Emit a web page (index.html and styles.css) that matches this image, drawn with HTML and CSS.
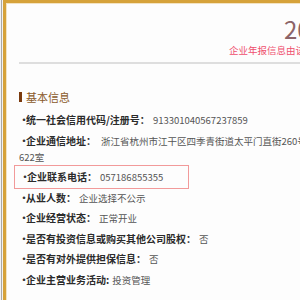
FILE: index.html
```html
<!DOCTYPE html>
<html lang="zh-CN">
<head>
  <meta charset="UTF-8">
  <title>企业年度报告</title>
  <link rel="stylesheet" href="styles.css">
</head>
<body>
  <div class="frame">
    <div class="report">
      <div class="report-head">
        <div class="report-title">2018年度报告</div>
        <div class="report-note">企业年报信息由该企业提供，企业对其报送信息的真实性、合法性负责</div>
      </div>
      <hr class="divider">

      <h3 class="section-title"><span class="mark"></span>基本信息</h3>
      <ul class="info-list">
        <li><span class="label">统一社会信用代码/注册号：</span><span class="value">913301040567237859</span></li>
        <li><span class="label">企业通信地址：</span><span class="value addr">浙江省杭州市江干区四季青街道太平门直街260号三新银座大厦622室</span></li>
        <li class="highlight"><span class="label">企业联系电话：</span><span class="value">057186855355</span></li>
        <li><span class="label">从业人数：</span><span class="value">企业选择不公示</span></li>
        <li><span class="label">企业经营状态：</span><span class="value">正常开业</span></li>
        <li><span class="label">是否有投资信息或购买其他公司股权：</span><span class="value">否</span></li>
        <li><span class="label">是否有对外提供担保信息：</span><span class="value">否</span></li>
        <li><span class="label">企业主营业务活动:</span><span class="value">投资管理</span></li>
      </ul>
    </div>
  </div>
</body>
</html>
```

FILE: styles.css
```css
body {
  margin: 0;
  overflow: hidden;
  background: #f2f2f2;
  font-family: "Noto Sans CJK SC", "Noto Sans", sans-serif;
  color: #333;
}
.frame {
  margin-left: 1px;
  padding-left: 1px;
  border-left: 1px solid #a8a8a8;
  height: 300px;
}
.report {
  width: 480px;
  height: 100%;
  box-sizing: border-box;
  background: #fdfdfd;
  border-top: 3px solid #d6a23a;
  border-left: 3px solid #d6a23a;
  box-shadow: inset 1px 1px 0 #f3e3c2;
  padding: 0 0 0 13px;
}
.report-head {
  padding-top: 12px;
}
.report-title {
  padding-left: 265px;
  font-size: 24px;
  line-height: 28px;
  color: #8c6468;
  white-space: nowrap;
}
.report-note {
  padding-left: 210px;
  font-size: 9.5px;
  line-height: 14px;
  color: #ef4f6e;
  white-space: nowrap;
}
.divider {
  margin: 5px 0 0;
  border: none;
  border-top: 2px solid #dedede;
}
.section-title {
  margin: 25px 0 0;
  font-size: 11px;
  font-weight: normal;
  line-height: 16px;
  color: #8b5a2b;
  display: flex;
  align-items: center;
}
.mark {
  width: 3px;
  height: 10px;
  margin-right: 4px;
  background: #7a3a0e;
}
.info-list {
  list-style: none;
  margin: 7px 0 0;
  padding: 0;
  width: 360px;
  font-size: 10px;
  line-height: 15px;
}
.info-list li {
  margin-bottom: 4.5px;
}
.info-list li::before {
  content: "·";
  display: inline-block;
  width: 7px;
  font-weight: bold;
}
.label {
  font-weight: bold;
  color: #2b2b2b;
}
.value {
  margin-left: 3px;
  font-size: 9.5px;
  color: #555;
}
.value.addr {
  margin-left: 5px;
}
.info-list li.highlight {
  width: 168px;
  margin-left: -5px;
  padding: 3px 0 3px 5px;
  margin-top: -4px;
  margin-bottom: 0.5px;
  border: 1px solid #f29a9a;
}
```
